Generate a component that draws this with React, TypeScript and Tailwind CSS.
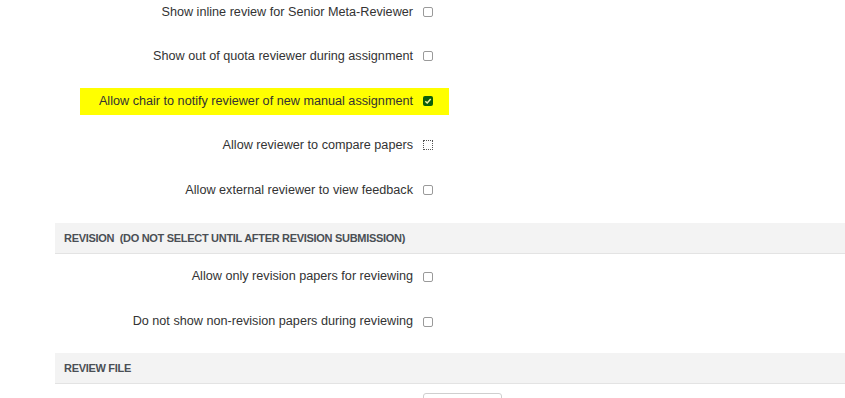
import React from "react";

type Opt = { label: string; checked?: boolean; highlight?: boolean; focused?: boolean };

const general: Opt[] = [
  { label: "Show inline review for Senior Meta-Reviewer" },
  { label: "Show out of quota reviewer during assignment" },
  { label: "Allow chair to notify reviewer of new manual assignment", checked: true, highlight: true },
  { label: "Allow reviewer to compare papers", focused: true },
  { label: "Allow external reviewer to view feedback" },
];

const revision: Opt[] = [
  { label: "Allow only revision papers for reviewing" },
  { label: "Do not show non-revision papers during reviewing" },
];

function Box({ checked, focused }: { checked?: boolean; focused?: boolean }) {
  if (checked) {
    return (
      <span className="flex h-[10px] w-[10px] items-center justify-center rounded-[2px] bg-[#0b5d0b]">
        <svg width="8" height="8" viewBox="0 0 8 8">
          <path d="M1.3 4.2 L3.2 6 L6.7 2" fill="none" stroke="#f2f2a0" strokeWidth="1.5" />
        </svg>
      </span>
    );
  }
  return (
    <span
      className={
        focused
          ? "block h-[10px] w-[10px] border border-dotted border-[#555] bg-white"
          : "block h-[10px] w-[10px] rounded-[2px] border border-[#9a9a9a] bg-white"
      }
    />
  );
}

function Row({ opt, h }: { opt: Opt; h: string }) {
  return (
    <div className={`flex w-[394px] items-center justify-end ${h}`}>
      <div
        className={
          opt.highlight
            ? "flex h-[27px] items-center gap-[10px] bg-[#ffff00] pl-[19px] pr-[16px]"
            : "flex items-center gap-[10px] pr-[16px]"
        }
      >
        <span className="text-[12.65px] text-[#333]">{opt.label}</span>
        <Box checked={opt.checked} focused={opt.focused} />
      </div>
    </div>
  );
}

function SectionHeader({ children }: { children: React.ReactNode }) {
  return (
    <div className="flex h-[31px] items-center border-b border-[#e3e3e3] bg-[#f3f3f3] pl-[9px] text-[11px] font-bold tracking-[-0.3px] text-[#4a4f55]">
      {children}
    </div>
  );
}

export default function App() {
  return (
    <div
      className="h-[398px] w-[845px] overflow-hidden bg-white"
      style={{ fontFamily: '"Liberation Sans", Arial, sans-serif' }}
    >
      <div className="ml-[55px] mt-[-10.25px]">
        {general.map((o) => (
          <Row key={o.label} opt={o} h="h-[44.5px]" />
        ))}

        <div className="mt-[11px]">
          <SectionHeader>
            <span className="whitespace-pre">REVISION  (DO NOT SELECT UNTIL AFTER REVISION SUBMISSION)</span>
          </SectionHeader>
        </div>

        {revision.map((o) => (
          <Row key={o.label} opt={o} h="h-[45px]" />
        ))}

        <div className="mt-[9px]">
          <SectionHeader>REVIEW FILE</SectionHeader>
        </div>

        <div className="ml-[368px] mt-[9px] h-[30px] w-[79px] rounded-[3px] border border-[#cfcfcf] bg-white" />
      </div>
    </div>
  );
}
